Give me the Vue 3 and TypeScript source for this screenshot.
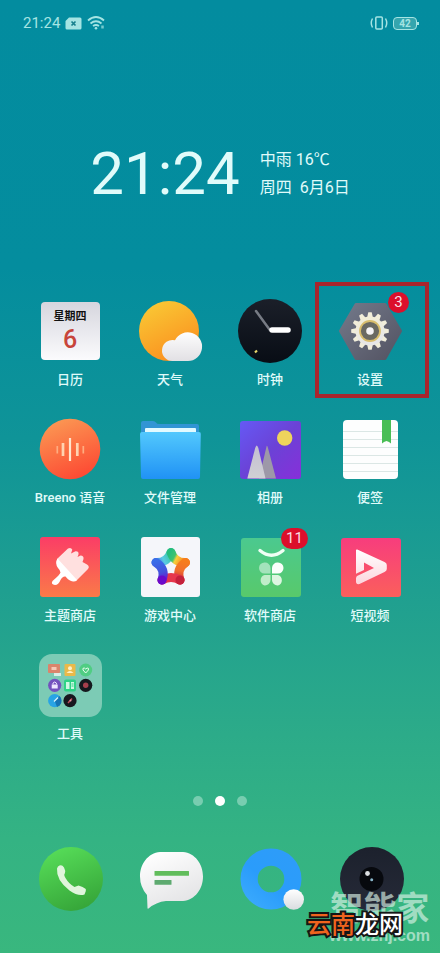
<script setup lang="ts">
import { ref } from 'vue'

const time = ref('21:24')
const battery = ref(42)
const pages = [0, 1, 2]
const activePage = ref(1)
const noteLines = [14, 22, 30, 38, 46, 54]
const teeth = Array.from({ length: 12 }, (_, i) => i * 30)
</script>

<template>
  <main class="screen">
    <header class="status">
      <div class="status-side">
        <span>{{ time }}</span>
        <svg width="17" height="13" viewBox="0 0 17 13" aria-hidden="true">
          <path d="M4 .5H15a1.500 1.500 0 0 1 1.500 1.500V11a1.500 1.500 0 0 1-1.500 1.500H2A1.500 1.500 0 0 1 .5 11V4Z" fill="#a5e4e3" />
          <path d="M6.500 4.500l4 4m0-4l-4 4" stroke="#17808d" stroke-width="1.700" />
        </svg>
        <svg width="18" height="14" viewBox="0 0 18 14" fill="none" stroke="#a5e4e3" stroke-width="1.800" aria-hidden="true">
          <path d="M1 4.500Q9-2.500 17 4.500M3.500 7.500q5.500-4.500 11 0M6 10q3-2 6 0" />
          <circle cx="9" cy="12.300" r="1.300" fill="#a5e4e3" stroke="none" />
          <path d="M15.500 9.500v3" stroke-width="2.500" opacity=".7" />
        </svg>
      </div>
      <div class="status-side">
        <svg width="18" height="14" viewBox="0 0 18 14" fill="none" stroke="#a5e4e3" stroke-width="1.500" aria-hidden="true">
          <rect x="5.800" y="1" width="6.500" height="12" rx="1" />
          <path d="M2.500 2.500Q0 7 2.500 11.500M15.500 2.500Q18 7 15.500 11.500" />
        </svg>
        <span class="battery">{{ battery }}</span>
      </div>
    </header>

    <section class="widget">
      <div class="clock">{{ time }}</div>
      <div class="info">
        <div>中雨 16℃</div>
        <div class="date"><span>周四</span><span>6月6日</span></div>
      </div>
    </section>

    <section class="grid">
      <button class="app" type="button">
        <svg class="icon" viewBox="0 0 64 64">
          <defs>
            <linearGradient id="cal" x1="0" y1="0" x2="0" y2="1"><stop stop-color="#d6d6de" /><stop offset="1" stop-color="#fbfbfd" /></linearGradient>
          </defs>
          <rect x="3" y="3" width="59" height="58" rx="4" fill="url(#cal)" />
          <text class="weekday" x="32" y="21">星期四</text>
          <text class="day" x="32" y="49">6</text>
        </svg>
        <span>日历</span>
      </button>

      <button class="app" type="button">
        <svg class="icon" viewBox="0 0 64 64">
          <defs>
            <linearGradient id="sun" x1=".2" y1="0" x2=".7" y2="1"><stop stop-color="#f9c935" /><stop offset="1" stop-color="#fb8d1e" /></linearGradient>
            <linearGradient id="cloud" x1="0" y1="0" x2="0" y2="1"><stop stop-color="#fdfdfd" /><stop offset="1" stop-color="#e2e0e4" /></linearGradient>
          </defs>
          <circle cx="31" cy="32" r="30" fill="url(#sun)" />
          <path d="M34.500 62A10.500 10.500 0 1 1 37 41.300A14.300 14.300 0 1 1 50 62Z" fill="url(#cloud)" />
        </svg>
        <span>天气</span>
      </button>

      <button class="app" type="button">
        <svg class="icon" viewBox="0 0 64 64">
          <defs>
            <linearGradient id="dial" x1="0" y1="0" x2="0" y2="1"><stop stop-color="#1b1f29" /><stop offset="1" stop-color="#080d15" /></linearGradient>
          </defs>
          <circle cx="32" cy="32" r="32" fill="url(#dial)" />
          <path d="M18 12L31.500 30.500" stroke="#777b84" stroke-width="2.500" stroke-linecap="round" />
          <path d="M34 31H50" stroke="#fff" stroke-width="5.500" stroke-linecap="round" />
          <path d="M17 53.500l2-2" stroke="#e8d66b" stroke-width="2.200" />
        </svg>
        <span>时钟</span>
      </button>

      <button class="app highlighted" type="button">
        <svg class="icon" viewBox="0 0 64 64">
          <defs>
            <linearGradient id="hex" x1="0" y1="0" x2="1" y2="1"><stop stop-color="#73798a" /><stop offset="1" stop-color="#535362" /></linearGradient>
            <linearGradient id="cog" x1="0" y1="0" x2=".3" y2="1"><stop stop-color="#f3eed4" /><stop offset="1" stop-color="#e6e6e8" /></linearGradient>
          </defs>
          <path d="M18 5.500H47L62.500 32L47 59.500H18L2.500 32Z" fill="url(#hex)" stroke="url(#hex)" stroke-width="3" stroke-linejoin="round" />
          <g fill="#f1edda">
            <path v-for="a in teeth" :key="a" d="M29 19L30.300 13.200H33.700L35 19Z" :transform="`rotate(${a} 32 32)`" />
          </g>
          <circle cx="32" cy="32" r="14.500" fill="url(#cog)" />
          <circle cx="32" cy="32" r="10" fill="#6a6962" stroke="#d8bd6c" stroke-width="1.800" />
          <circle cx="32" cy="32" r="3.800" fill="#f4f2f4" />
        </svg>
        <span>设置</span>
        <b class="badge">3</b>
      </button>

      <button class="app" type="button">
        <svg class="icon" viewBox="0 0 64 64">
          <defs>
            <linearGradient id="voice" x1=".2" y1="0" x2=".6" y2="1"><stop stop-color="#fb9a54" /><stop offset="1" stop-color="#fd4a33" /></linearGradient>
          </defs>
          <circle cx="32" cy="32" r="30.300" fill="url(#voice)" />
          <path d="M32 21V44" stroke="#ffe5cd" stroke-width="2.200" />
          <path d="M25 26V39M39.300 26V39" stroke="#ffd3b0" stroke-width="2.700" />
          <path d="M19.300 29V36.500M45.300 29V36.500" stroke="#ffac80" stroke-width="1.700" />
        </svg>
        <span>Breeno 语音</span>
      </button>

      <button class="app" type="button">
        <svg class="icon" viewBox="0 0 64 64">
          <defs>
            <linearGradient id="files" x1="0" y1="0" x2="0" y2="1"><stop stop-color="#52c8fd" /><stop offset="1" stop-color="#2092f5" /></linearGradient>
          </defs>
          <path d="M3 6a2 2 0 0 1 2-2H15q2 0 3 1.500T21 7H59a2 2 0 0 1 2 2V30H3Z" fill="#3195d4" />
          <rect x="7" y="11" width="51" height="10" rx="1" fill="#e1faff" />
          <path d="M2 17q0-2 2-2H61q2 0 1.800 2L62 60q0 2-2 2H5q-2 0-2-2Z" fill="url(#files)" />
        </svg>
        <span>文件管理</span>
      </button>

      <button class="app" type="button">
        <svg class="icon" viewBox="0 0 64 64">
          <defs>
            <linearGradient id="album" x1="0" y1="0" x2="1" y2="1"><stop stop-color="#6559f5" /><stop offset=".5" stop-color="#6b42d6" /><stop offset="1" stop-color="#872fd9" /></linearGradient>
            <linearGradient id="peak" x1="0" y1="0" x2="0" y2="1"><stop stop-color="#c3bfd2" /><stop offset="1" stop-color="#d0d0d4" /></linearGradient>
          </defs>
          <rect x="2" y="4" width="61" height="58" rx="3" fill="url(#album)" />
          <circle cx="46.700" cy="21" r="7.700" fill="#eed45c" />
          <path d="M28.700 28.700Q29.500 28.700 30 31L38 61.500H21Z" fill="#9d98a8" />
          <path d="M18.700 28.500Q19.500 28.700 20.300 31L27.500 61.500H9.300L17.200 31Q18 28.700 18.700 28.500Z" fill="url(#peak)" />
        </svg>
        <span>相册</span>
      </button>

      <button class="app" type="button">
        <svg class="icon" viewBox="0 0 64 64">
          <rect x="5" y="3" width="55" height="59" rx="4" fill="#fdfefe" />
          <path v-for="y in noteLines" :key="y" :d="`M5 ${y}.500H60`" stroke="#dbe7e5" />
          <path d="M44 3H53V26.500L51 25L48.500 24L46 25L44 26.500Z" fill="#49be55" />
        </svg>
        <span>便签</span>
      </button>

      <button class="app" type="button">
        <svg class="icon" viewBox="0 0 64 64">
          <defs>
            <linearGradient id="theme" x1="0" y1="0" x2="0" y2="1"><stop stop-color="#fb3d66" /><stop offset="1" stop-color="#fa7a48" /></linearGradient>
          </defs>
          <rect x="2" y="2" width="60" height="60" rx="3" fill="url(#theme)" />
          <path d="M19 24L30 13.500Q33 11.800 34.300 14.800L33 18.500L37.500 16.200Q41 16 40.500 19.500L39.500 22L42.500 20.500Q46 20.500 45.500 24L44.500 27L49 29.500Q52 31.500 50 34L38 46Z" fill="#ffe0df" />
          <path d="M19.500 23.500L39 45Q37.500 46.800 35 46.500Q31 46 27.500 41.500Q24.500 41 22.500 45Q20.500 50 17 50Q12.500 49.500 14.500 46Q22 39.500 22.500 37.500Q22.500 35.500 20 33Q16.500 28 19.500 23.500Z" fill="#fff" />
        </svg>
        <span>主题商店</span>
      </button>

      <button class="app" type="button">
        <svg class="icon" viewBox="0 0 64 64">
          <defs>
            <linearGradient id="armA" gradientUnits="userSpaceOnUse" x1="18" y1="27" x2="35" y2="18"><stop stop-color="#3a6ce6" /><stop offset=".4" stop-color="#5acbe4" /><stop offset="1" stop-color="#2bc38a" /></linearGradient>
            <linearGradient id="armB" gradientUnits="userSpaceOnUse" x1="31" y1="19" x2="46" y2="27"><stop stop-color="#25bd7d" /><stop offset=".35" stop-color="#3fc36f" /><stop offset=".5" stop-color="#f8d03b" /><stop offset="1" stop-color="#f67d1c" /></linearGradient>
            <linearGradient id="armC" gradientUnits="userSpaceOnUse" x1="46" y1="26" x2="42" y2="46"><stop stop-color="#f67d1c" /><stop offset=".5" stop-color="#f1702c" /><stop offset="1" stop-color="#ca2440" /></linearGradient>
            <linearGradient id="armD" gradientUnits="userSpaceOnUse" x1="18" y1="26" x2="24" y2="46"><stop stop-color="#3a6ee8" /><stop offset=".6" stop-color="#4551dc" /><stop offset="1" stop-color="#6e12cf" /></linearGradient>
          </defs>
          <rect x="3" y="2" width="59" height="60" rx="3" fill="#f5f6fa" />
          <g fill="none" stroke-width="9" stroke-linecap="round">
            <path d="M18 27.500Q29 28 33 17.500" stroke="url(#armA)" />
            <path d="M33 17.500Q37 28 47.500 27.500" stroke="url(#armB)" />
            <path d="M47.500 27.500Q38 34 42 45" stroke="url(#armC)" />
            <path d="M42 45Q33 40 24 45" stroke="#e6374c" />
            <path d="M24 45Q28 34 18 27.500" stroke="url(#armD)" />
          </g>
          <circle cx="42" cy="45" r="4.500" fill="#c4213c" />
          <circle cx="24" cy="45" r="4.500" fill="#6b0acb" />
        </svg>
        <span>游戏中心</span>
      </button>

      <button class="app" type="button">
        <svg class="icon" viewBox="0 0 64 64">
          <defs>
            <linearGradient id="store" x1="0" y1="0" x2="0" y2="1"><stop stop-color="#4bc98f" /><stop offset="1" stop-color="#58c96b" /></linearGradient>
          </defs>
          <rect x="3" y="3" width="60" height="59" rx="3" fill="url(#store)" />
          <path d="M22 15.500Q33.500 25 45 15.500" fill="none" stroke="#f0fff4" stroke-width="3.400" stroke-linecap="round" />
          <path d="M26.500 27.500A5.500 5.500 0 0 0 26.500 38.500H32.500V33A5.500 5.500 0 0 0 26.500 27.500Z" fill="#a3e3bb" />
          <path d="M40 27.500A5.500 5.500 0 0 1 40 38.500H34V33A5.500 5.500 0 0 1 40 27.500Z" fill="#fafffb" />
          <path d="M26.500 50.500A5.500 5.500 0 0 1 26.500 40H32.500V45A5.500 5.500 0 0 1 26.500 50.500Z" fill="#c0edc9" />
          <path d="M40 50.500A5.500 5.500 0 0 0 40 40H34V45A5.500 5.500 0 0 0 40 50.500Z" fill="#ddf6e0" />
        </svg>
        <span>软件商店</span>
        <b class="badge wide">11</b>
      </button>

      <button class="app" type="button">
        <svg class="icon" viewBox="0 0 64 64">
          <defs>
            <linearGradient id="video" x1="0" y1="0" x2="0" y2="1"><stop stop-color="#f73d7d" /><stop offset="1" stop-color="#fb5f5c" /></linearGradient>
            <linearGradient id="fold" x1="0" y1="0" x2="0" y2="1"><stop stop-color="#fff" /><stop offset="1" stop-color="#fcd5dd" /></linearGradient>
          </defs>
          <rect x="3" y="3" width="60" height="59" rx="3" fill="url(#video)" />
          <path d="M18 15.500q0-1.500 1.300-1L46.500 27q2.300 1 2.300 3v4q0 2-2.300 3L21.500 49Q18 49.700 18 46.500V43.500q0-2 1.500-2.700L36 33L26 27.500V35L18 38.800Z" fill="url(#fold)" />
        </svg>
        <span>短视频</span>
      </button>

      <button class="app" type="button">
        <svg class="icon" viewBox="0 0 64 64">
          <rect x="1" y="1" width="63" height="63" rx="13" fill="#7ccbb5" />
          <rect x="10" y="11" width="12" height="9" rx="1" fill="#da856c" />
          <path d="M13.500 14h5v3h-5z" fill="#f6c8b6" />
          <path d="M16 20h7v3h-7z" fill="#d8eee8" />
          <rect x="26.500" y="11" width="11" height="12" rx="1" fill="#eab94a" />
          <circle cx="32" cy="15.300" r="2" fill="#fff0c7" />
          <path d="M28.500 20q3.500-4 7 0z" fill="#fff0c7" />
          <circle cx="47.700" cy="17" r="6.500" fill="#50cd83" />
          <path d="M47.700 20L45 17q-.7-2.300 1.300-2l1.400 1 1.400-1q2-.3 1.300 2Z" fill="none" stroke="#e9fff0" />
          <circle cx="16.700" cy="32.300" r="6.600" fill="#7351bd" />
          <rect x="13.700" y="31.500" width="6" height="4" fill="#eee6ff" />
          <path d="M15 31.500v-1.500q1.700-2 3.400 0v1.500" fill="none" stroke="#eee6ff" />
          <rect x="26" y="26.500" width="12" height="12" rx="2" fill="#2fd386" />
          <path d="M28 29h3.500v7H28zM33 29h3v7h-3z" fill="#cef8e2" />
          <path d="M33.500 31h2m-2 2h2" stroke="#2fd386" />
          <circle cx="47.700" cy="32.300" r="6.600" fill="#15191e" />
          <circle cx="47.700" cy="32.300" r="2.700" fill="#a63f4c" />
          <circle cx="16.700" cy="47.700" r="6.600" fill="#28a4e5" />
          <path d="M16.700 47.700L21.500 43A6.600 6.600 0 0 1 19 54Z" fill="#1673b5" />
          <path d="M16 48.500l4-4" stroke="#def6ff" stroke-width="1.300" />
          <circle cx="32" cy="47.700" r="6.600" fill="#17171e" />
          <path d="M30 50l4-4.500" stroke="#bd4a5b" stroke-width="1.500" />
          <circle cx="32.500" cy="47.500" r="1" fill="#e49ba4" />
        </svg>
        <span>工具</span>
      </button>
    </section>

    <nav class="dots" aria-label="Pages">
      <button
        v-for="p in pages"
        :key="p"
        class="dot"
        :class="{ active: p === activePage }"
        type="button"
        :aria-label="`Page ${p + 1}`"
        @click="activePage = p"
      ></button>
    </nav>

    <footer class="dock">
      <button class="app" type="button" aria-label="Phone">
        <svg class="icon" viewBox="0 0 64 64">
          <defs>
            <linearGradient id="call" x1=".3" y1="0" x2=".7" y2="1"><stop stop-color="#56dc58" /><stop offset="1" stop-color="#35a438" /></linearGradient>
          </defs>
          <circle cx="33" cy="32" r="32" fill="url(#call)" />
          <path d="M20 19.500Q23.500 16.500 26 20.500Q28 24 26.800 26.500Q25.500 27.500 27.500 31Q31 37 36.500 40Q38.500 39 40.500 38.500Q45 39.500 47.800 42Q48.500 44 46.500 47.500Q40 49.500 31.500 43.500Q18 33 19 21.500Z" fill="#dff5dc" />
        </svg>
      </button>
      <button class="app" type="button" aria-label="Messages">
        <svg class="icon" viewBox="0 0 64 64">
          <defs>
            <linearGradient id="sms" x1=".2" y1="0" x2=".7" y2="1"><stop stop-color="#fff" /><stop offset="1" stop-color="#e2e2e4" /></linearGradient>
          </defs>
          <path d="M22 5H45C57 6 65 17 65 29.500S57 53 45 54H28Q18 55 10.500 61.500Q9.500 62 9.500 61L9 48Q2 40 2 29.500C2 17 10 6 22 5Z" fill="url(#sms)" />
          <rect x="16.500" y="24" width="34.500" height="4.700" rx=".5" fill="#62bd5c" />
          <rect x="16.500" y="33" width="17" height="4.700" rx=".5" fill="#5eaa70" />
        </svg>
      </button>
      <button class="app" type="button" aria-label="Browser">
        <svg class="icon" viewBox="0 0 64 64">
          <defs>
            <linearGradient id="web" x1="1" y1="0" x2=".2" y2="1"><stop stop-color="#2f9cf8" /><stop offset=".6" stop-color="#2a9cfb" /><stop offset="1" stop-color="#3baafd" /></linearGradient>
            <linearGradient id="knob" x1="0" y1="0" x2="0" y2="1"><stop stop-color="#fff" /><stop offset="1" stop-color="#d9dcdf" /></linearGradient>
          </defs>
          <path fill-rule="evenodd" d="M2.500 32a30.500 30.500 0 1 0 61 0a30.500 30.500 0 1 0-61 0ZM19.700 32a13.300 13.300 0 1 1 26.600 0a13.300 13.300 0 1 1-26.600 0Z" fill="url(#web)" />
          <circle cx="55.700" cy="52.500" r="10.300" fill="url(#knob)" />
        </svg>
      </button>
      <button class="app" type="button" aria-label="Camera">
        <svg class="icon" viewBox="0 0 64 64">
          <defs>
            <linearGradient id="cam" x1="0" y1="0" x2="0" y2="1"><stop stop-color="#1c212d" /><stop offset="1" stop-color="#262a38" /></linearGradient>
          </defs>
          <circle cx="34" cy="32" r="32" fill="url(#cam)" />
          <circle cx="33.500" cy="32" r="12" fill="#07090e" />
          <circle cx="29.500" cy="26.500" r="2.400" fill="#dcdfe2" />
          <circle cx="33.700" cy="32.700" r="1.500" fill="#8ab7cb" />
        </svg>
      </button>
    </footer>

    <div class="watermark" aria-hidden="true">
      <div class="mark-name">智能家</div>
      <div class="mark-site">www.znj.com</div>
    </div>
    <div class="stamp"><em>云南</em>龙网</div>
  </main>
</template>

<style>
body {
  background: #38b67f;
}
</style>

<style scoped>
.screen {
  position: relative;
  box-sizing: border-box;
  min-height: 100vh;
  padding-bottom: 42px;
  display: flex;
  flex-direction: column;
  overflow: hidden;
  color: #e0fbfa;
  font-family: Roboto, "Noto Sans CJK SC", sans-serif;
  background: linear-gradient(#038c9f 0%, #048d9e 28%, #0f9498 46%, #1f9f90 62%, #2cab89 77%, #34b383 88%, #39b77e 100%);
}

.status {
  display: flex;
  justify-content: space-between;
  align-items: center;
  height: 46px;
  padding: 0 23px;
}

.status-side {
  display: flex;
  align-items: center;
  gap: 5px;
  color: #a5e4e3;
  font-size: 15px;
}

.battery {
  position: relative;
  box-sizing: border-box;
  width: 24px;
  height: 13px;
  border: 1px solid #a5e4e3;
  border-radius: 4px;
  background: #35a5ae;
  font-size: 10px;
  font-weight: 700;
  line-height: 11px;
  text-align: center;
}

.battery::after {
  content: "";
  position: absolute;
  right: -3px;
  top: 4px;
  width: 2px;
  height: 3px;
  background: #a5e4e3;
}

.widget {
  display: flex;
  justify-content: center;
  align-items: center;
  gap: 20px;
  height: 72px;
  margin: 92px 0 89px;
}

.clock {
  font-size: 60px;
  line-height: 72px;
}

.info {
  font-size: 16px;
  line-height: 28px;
}

.date {
  display: flex;
  gap: 8px;
}

.grid,
.dock {
  display: grid;
  grid-template-columns: repeat(4, 1fr);
  row-gap: 28px;
  padding: 0 20px;
}

.app {
  position: relative;
  display: flex;
  flex-direction: column;
  align-items: center;
  gap: 7px;
  padding: 0;
  border: 0;
  background: none;
  color: inherit;
  font: 500 13px/19px Roboto, "Noto Sans CJK SC", sans-serif;
}

.icon {
  display: block;
  width: 64px;
  height: 64px;
  overflow: visible;
}

.weekday {
  fill: #111;
  font: 700 11px "Noto Sans CJK SC", sans-serif;
  text-anchor: middle;
}

.day {
  fill: #c8453b;
  font: 500 25px Roboto, sans-serif;
  text-anchor: middle;
}

.highlighted::after {
  content: "";
  position: absolute;
  inset: -17px -9px -9px -5px;
  border: 4px solid #a9252d;
}

.badge {
  position: absolute;
  top: -7px;
  left: 50%;
  box-sizing: border-box;
  width: 21px;
  height: 21px;
  margin-left: 18px;
  border-radius: 11px;
  background: #dc0f2b;
  color: #f8dfe4;
  font-size: 15px;
  font-weight: 400;
  line-height: 21px;
  text-align: center;
}

.badge.wide {
  width: 27px;
  margin-left: 11px;
}

.dots {
  display: flex;
  justify-content: center;
  gap: 12px;
  margin: 53px 0 41px;
}

.dot {
  width: 10px;
  height: 10px;
  padding: 0;
  border: 0;
  border-radius: 50%;
  background: #78cdb0;
}

.dot.active {
  background: #fff;
}

.watermark {
  position: absolute;
  right: 10px;
  bottom: 8px;
  color: #d9f2e6;
  opacity: 0.65;
  font-weight: 700;
  text-align: center;
}

.mark-name {
  font-size: 33px;
  line-height: 34px;
}

.mark-site {
  font-family: "Liberation Sans", sans-serif;
  font-size: 16px;
  line-height: 19px;
}

.stamp {
  position: absolute;
  right: 37px;
  bottom: 14px;
  color: #fff;
  font-size: 24px;
  font-weight: 500;
  line-height: 28px;
  paint-order: stroke fill;
  -webkit-text-stroke: 4px #161616;
}

.stamp em {
  color: #f0641e;
  font-style: normal;
}
</style>
